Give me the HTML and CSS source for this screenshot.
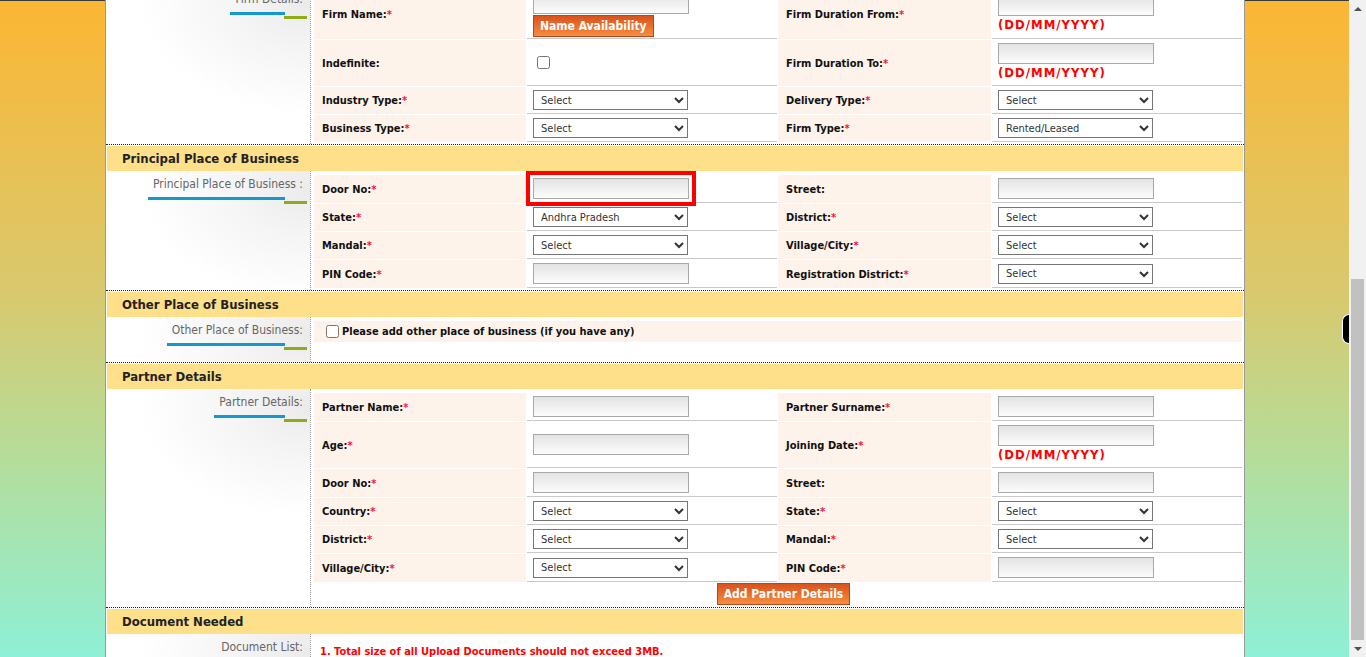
FILE: index.html
```html
<!DOCTYPE html>
<html lang="en">
<head>
    <meta charset="UTF-8">
    <meta name="viewport" content="width=device-width, initial-scale=1.0">
    <title>Firm Registration</title>
    <link rel="stylesheet" href="styles.css">
</head>
<body>
    <div class="screen">
        <div class="viewport">
            <div class="sheet">
                <div class="scrolled">
                    <!-- Firm details (tail of the section above) -->
                    <div class="sec-body">
                        <div class="side"><span>Firm Details:</span></div>
                        <table class="grid">
                            <colgroup><col class="c-lbl"><col class="c-val"><col class="c-lbl2"><col class="c-val"></colgroup>
                            <tr class="tall">
                                <td class="lbl">Firm Name:<i>*</i></td>
                                <td class="val">
                                    <input type="text" class="txt">
                                    <button class="btn">Name Availability</button>
                                </td>
                                <td class="lbl">Firm Duration From:<i>*</i></td>
                                <td class="val">
                                    <input type="text" class="txt">
                                    <span class="hint">(DD/MM/YYYY)</span>
                                </td>
                            </tr>
                            <tr>
                                <td class="lbl">Indefinite:</td>
                                <td class="val"><input type="checkbox" class="chk"></td>
                                <td class="lbl">Firm Duration To:<i>*</i></td>
                                <td class="val">
                                    <input type="text" class="txt">
                                    <span class="hint">(DD/MM/YYYY)</span>
                                </td>
                            </tr>
                            <tr>
                                <td class="lbl">Industry Type:<i>*</i></td>
                                <td class="val"><select class="sel"><option>Select</option></select></td>
                                <td class="lbl">Delivery Type:<i>*</i></td>
                                <td class="val"><select class="sel"><option>Select</option></select></td>
                            </tr>
                            <tr>
                                <td class="lbl">Business Type:<i>*</i></td>
                                <td class="val"><select class="sel"><option>Select</option></select></td>
                                <td class="lbl">Firm Type:<i>*</i></td>
                                <td class="val"><select class="sel"><option>Rented/Leased</option></select></td>
                            </tr>
                        </table>
                    </div>

                    <!-- Principal place -->
                    <div class="sec-head">Principal Place of Business</div>
                    <div class="sec-body">
                        <div class="side"><span>Principal Place of Business :</span></div>
                        <table class="grid">
                            <colgroup><col class="c-lbl"><col class="c-val"><col class="c-lbl2"><col class="c-val"></colgroup>
                            <tr>
                                <td class="lbl">Door No:<i>*</i></td>
                                <td class="val"><input type="text" class="txt focus"></td>
                                <td class="lbl">Street:</td>
                                <td class="val"><input type="text" class="txt"></td>
                            </tr>
                            <tr>
                                <td class="lbl">State:<i>*</i></td>
                                <td class="val"><select class="sel"><option>Andhra Pradesh</option></select></td>
                                <td class="lbl">District:<i>*</i></td>
                                <td class="val"><select class="sel"><option>Select</option></select></td>
                            </tr>
                            <tr>
                                <td class="lbl">Mandal:<i>*</i></td>
                                <td class="val"><select class="sel"><option>Select</option></select></td>
                                <td class="lbl">Village/City:<i>*</i></td>
                                <td class="val"><select class="sel"><option>Select</option></select></td>
                            </tr>
                            <tr>
                                <td class="lbl">PIN Code:<i>*</i></td>
                                <td class="val"><input type="text" class="txt"></td>
                                <td class="lbl">Registration District:<i>*</i></td>
                                <td class="val"><select class="sel"><option>Select</option></select></td>
                            </tr>
                        </table>
                    </div>

                    <!-- Other place -->
                    <div class="sec-head">Other Place of Business</div>
                    <div class="sec-body">
                        <div class="side short"><span>Other Place of Business:</span></div>
                        <table class="grid">
                            <tr class="opt-row">
                                <td class="opt" colspan="4">
                                    <label><input type="checkbox" class="chk">Please add other place of business (if you have any)</label>
                                </td>
                            </tr>
                        </table>
                    </div>

                    <!-- Partners -->
                    <div class="sec-head">Partner Details</div>
                    <div class="sec-body">
                        <div class="side"><span>Partner Details:</span></div>
                        <table class="grid">
                            <colgroup><col class="c-lbl"><col class="c-val"><col class="c-lbl2"><col class="c-val"></colgroup>
                            <tr>
                                <td class="lbl">Partner Name:<i>*</i></td>
                                <td class="val"><input type="text" class="txt"></td>
                                <td class="lbl">Partner Surname:<i>*</i></td>
                                <td class="val"><input type="text" class="txt"></td>
                            </tr>
                            <tr>
                                <td class="lbl">Age:<i>*</i></td>
                                <td class="val"><input type="text" class="txt"></td>
                                <td class="lbl">Joining Date:<i>*</i></td>
                                <td class="val">
                                    <input type="text" class="txt">
                                    <span class="hint">(DD/MM/YYYY)</span>
                                </td>
                            </tr>
                            <tr>
                                <td class="lbl">Door No:<i>*</i></td>
                                <td class="val"><input type="text" class="txt"></td>
                                <td class="lbl">Street:</td>
                                <td class="val"><input type="text" class="txt"></td>
                            </tr>
                            <tr>
                                <td class="lbl">Country:<i>*</i></td>
                                <td class="val"><select class="sel"><option>Select</option></select></td>
                                <td class="lbl">State:<i>*</i></td>
                                <td class="val"><select class="sel"><option>Select</option></select></td>
                            </tr>
                            <tr>
                                <td class="lbl">District:<i>*</i></td>
                                <td class="val"><select class="sel"><option>Select</option></select></td>
                                <td class="lbl">Mandal:<i>*</i></td>
                                <td class="val"><select class="sel"><option>Select</option></select></td>
                            </tr>
                            <tr>
                                <td class="lbl">Village/City:<i>*</i></td>
                                <td class="val"><select class="sel"><option>Select</option></select></td>
                                <td class="lbl">PIN Code:<i>*</i></td>
                                <td class="val"><input type="text" class="txt"></td>
                            </tr>
                            <tr class="btn-row">
                                <td colspan="4" class="actions"><button class="btn">Add Partner Details</button></td>
                            </tr>
                        </table>
                    </div>

                    <!-- Documents -->
                    <div class="sec-head">Document Needed</div>
                    <div class="sec-body">
                        <div class="side"><span class="plain">Document List:</span></div>
                        <table class="grid">
                            <tr>
                                <td class="note" colspan="4">1. Total size of all Upload Documents should not exceed 3MB.</td>
                            </tr>
                        </table>
                    </div>
                </div>
            </div>
            <div class="side-tab"></div>
        </div>
        <div class="scrollbar">
            <div class="arrow up"></div>
            <div class="track-gap"></div>
            <div class="thumb"></div>
            <div class="arrow down"></div>
        </div>
    </div>
</body>
</html>
```

FILE: styles.css
```css
body {
    margin: 0;
    overflow: hidden;
    font-family: Tahoma, "DejaVu Sans Condensed", "DejaVu Sans", sans-serif;
    font-size: 11px;
    color: #111;
}
.screen { /* ventana completa: fondo + barra de desplazamiento */
    display: flex;
    height: 657px;
    overflow: hidden;
}
.viewport {
    flex: 1;
    position: relative;
    background: linear-gradient(to bottom, #3a3a3a 0, #3a3a3a 1px, #fcb634 1px, #d8c96f 45%, #b4dd9b 70%, #8ef0d6 100%);
}
.sheet { /* hoja blanca centrada */
    width: 1138px;
    height: 100%;
    margin: 0 104px 0 105px;
    background: #fff;
    border-left: 1px solid #9a9a9a;
    border-right: 1px solid #9a9a9a;
    overflow: hidden;
}
.scrolled {
    margin-top: -14px;
}

/* cabecera amarilla de cada seccion */
.sec-head {
    margin: 1px 1px 0;
    height: 25px;
    line-height: 25px;
    padding-left: 15px;
    background: #fee08a;
    font-size: 13px;
    font-weight: bold;
    color: #222;
}
.sec-body {
    display: flex;
    align-items: stretch;
    border-bottom: 1px dotted #222;
}
.side { /* columna de la izquierda con el titulo */
    width: 205px;
    flex: none;
    box-sizing: border-box;
    padding: 6px 7px 0 0;
    text-align: right;
    border-right: 1px dotted #999;
    background: radial-gradient(ellipse 170px 110px at 100% 18px, #ebebeb 0%, #f5f5f5 45%, rgba(255, 255, 255, 0) 100%), #fff;
}
.side.short {
    min-height: 45px;
}
.side span {
    display: inline-block;
    position: relative;
    line-height: 15px;
    padding-bottom: 8px;
    font-size: 12px;
    color: #666;
}
.side span::before {
    content: "";
    position: absolute;
    left: -5px;
    right: 18px;
    bottom: 0;
    height: 3px;
    background: #1399cf;
}
.side span::after {
    content: "";
    position: absolute;
    right: -4px;
    bottom: -4px;
    width: 23px;
    height: 3px;
    background: #8fab16;
}
.side span.plain::before,
.side span.plain::after {
    display: none;
}

/* tabla del formulario */
.grid {
    align-self: flex-start;
    width: 930px;
    table-layout: fixed;
    border-collapse: separate;
    border-spacing: 1px;
    margin: 3px 1px 1px 2px;
}
.c-lbl { width: 212px; }
.c-lbl2 { width: 213px; }
.c-val { width: 250px; }
.grid tr {
    height: 27px;
}
.grid tr.tall {
    height: 49px;
}
.lbl {
    background: #fdf3eb;
    padding: 0 8px;
    font-weight: bold;
    font-size: 11px;
    color: #111;
    white-space: nowrap;
}
.lbl i {
    font-style: normal;
    color: #f3163e;
}
.val {
    padding: 3px 6px;
    border-bottom: 1px solid #c9c9c9;
    vertical-align: middle;
}
.tall .val {
    padding: 2px 6px 1px;
}
.txt {
    display: block;
    width: 156px;
    height: 21px;
    box-sizing: border-box;
    margin: 0;
    padding: 0 4px;
    border: 1px solid #a9a9a9;
    background: linear-gradient(#e3e3e3, #fcfcfc);
    font: 11px Tahoma, "DejaVu Sans Condensed", "DejaVu Sans", sans-serif;
}
.txt.focus { /* campo marcado en rojo */
    outline: 4px solid #f00;
    outline-offset: 3px;
}
.sel {
    display: block;
    width: 155px;
    height: 20px;
    box-sizing: border-box;
    margin: 0;
    padding: 0 3px;
    border: 1px solid #767676;
    border-radius: 0;
    background-color: #fff;
    color: #333;
    font: 11px Tahoma, "DejaVu Sans Condensed", "DejaVu Sans", sans-serif;
}
.hint {
    display: block;
    margin: 1px 0;
    line-height: 16px;
    font-size: 13px;
    font-weight: bold;
    letter-spacing: 1px;
    color: #f00;
}
.chk {
    margin: 3px 3px 3px 4px;
    vertical-align: middle;
}
.btn {
    display: block;
    height: 22px;
    margin-top: 1px;
    padding: 0 6px;
    border: 1px solid #b7451b;
    background: linear-gradient(#d9521d, #f58e3f);
    color: #fff;
    font: bold 12px Tahoma, "DejaVu Sans Condensed", "DejaVu Sans", sans-serif;
    cursor: pointer;
}
.grid tr.opt-row {
    height: 21px;
}
.opt {
    background: #fdf3eb;
    padding: 0 8px;
    font-weight: bold;
    font-size: 11px;
}
.opt label {
    display: flex;
    align-items: center;
}
.btn-row td {
    padding: 0 0 0 11px;
    text-align: center;
}
.grid tr.btn-row {
    height: 22px;
}
.actions .btn {
    display: inline-block;
    margin: 0;
}
.note {
    padding: 5px 6px;
    color: #f00;
    font-weight: bold;
    font-size: 11px;
}

/* pestaña negra flotante */
.side-tab {
    position: absolute;
    right: 0;
    top: 314px;
    width: 6px;
    height: 28px;
    background: #000;
    border: 1px solid #fff;
    border-right: none;
    border-radius: 8px 0 0 8px;
}

/* barra de desplazamiento */
.scrollbar {
    width: 17px;
    flex: none;
    display: flex;
    flex-direction: column;
    background: #f1f1f1;
}
.arrow {
    height: 17px;
    flex: none;
    display: flex;
    align-items: center;
    justify-content: center;
}
.arrow::before {
    content: "";
    border-left: 4px solid transparent;
    border-right: 4px solid transparent;
}
.arrow.up::before {
    border-bottom: 4px solid #505050;
}
.arrow.down::before {
    border-top: 4px solid #505050;
}
.track-gap {
    height: 262px;
    flex: none;
}
.thumb {
    flex: 1;
    margin: 0 2px;
    background: #c1c1c1;
}
```
